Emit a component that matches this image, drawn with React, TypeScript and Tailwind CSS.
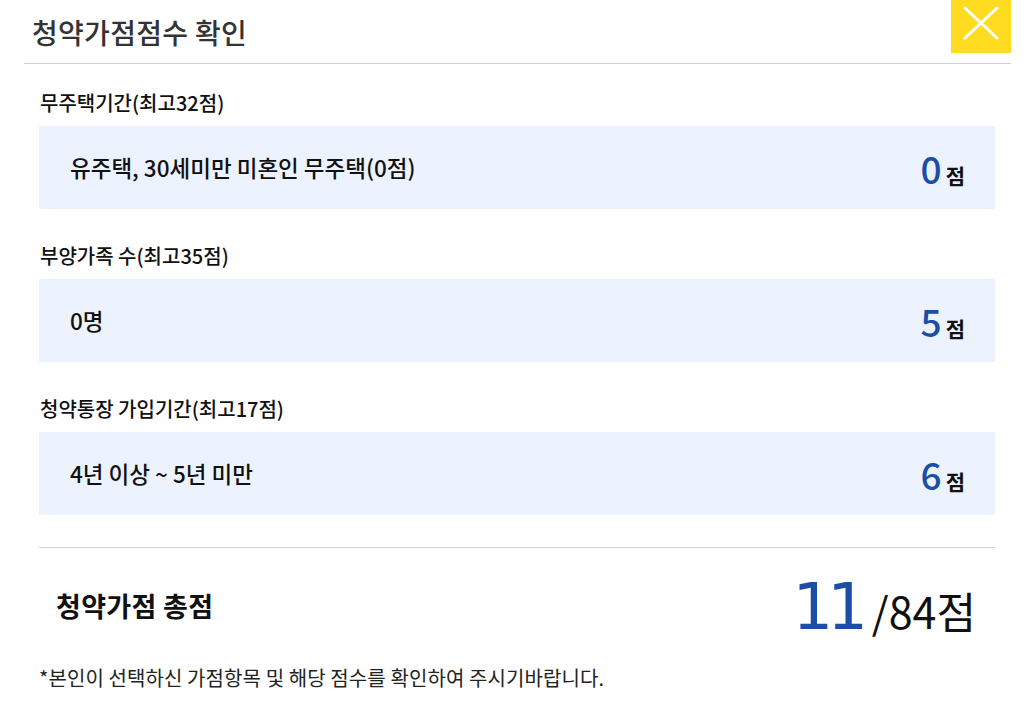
const items = [
  { label: '무주택기간', max: 32, value: '유주택, 30세미만 미혼인 무주택(0점)', score: 0 },
  { label: '부양가족 수', max: 35, value: '0명', score: 5 },
  { label: '청약통장 가입기간', max: 17, value: '4년 이상 ~ 5년 미만', score: 6 },
];

export default function App() {
  const total = items.reduce((sum, item) => sum + item.score, 0);

  return (
    <div
      className="w-[1032px] h-[704px] bg-white text-[#111]"
      style={{ fontFamily: '"Noto Sans CJK KR", "Noto Sans", sans-serif' }}
    >
      {/* Header */}
      <div className="ml-6 mr-[21px] h-16 border-b border-[#cfcfcf] flex items-start justify-between">
        <h1 className="pl-2 pt-[13px] text-[28px] leading-[38px] font-medium text-[#333] tracking-[0.3px]">
          청약가점점수 확인
        </h1>
        <button className="w-[60px] h-[53px] bg-[#ffdc22] flex items-center justify-center">
          <svg width="36" height="34" viewBox="0 0 36 34" className="mb-[7px]">
            <path d="M2 2 L34 32 M34 2 L2 32" stroke="white" strokeWidth="3" strokeLinecap="round" fill="none" />
          </svg>
        </button>
      </div>

      {/* Items */}
      <div className="pl-[39px] pr-[37px]">
        <div className="pt-[26px] flex flex-col gap-[34px]">
          {items.map((item) => (
            <div key={item.label}>
              <p className="pl-[1px] text-[20px] leading-[25px] font-medium mb-[11px]">
                {item.label}(최고{item.max}점)
              </p>
              <div className="h-[83px] bg-[#edf3fe] pl-[31px] pr-[30px] flex items-center justify-between">
                <span className="text-[22.5px] font-medium">{item.value}</span>
                <span className="flex items-baseline gap-[4px] pt-[2px]">
                  <span className="text-[37px] leading-none text-[#1c4ea6] font-medium">{item.score}</span>
                  <span className="text-[21px] leading-none font-bold">점</span>
                </span>
              </div>
            </div>
          ))}
        </div>

        {/* Total */}
        <div className="mt-[32px] border-t border-[#cfcfcf] h-[118px] flex items-center justify-between pl-[17px] pr-[19px]">
          <span className="text-[27px] font-bold tracking-[0.3px]">청약가점 총점</span>
          <span className="flex items-baseline gap-[10px]">
            <span
              className="text-[64px] leading-none text-[#1c4ea6] tracking-[-6px]"
              style={{ fontFamily: '"DejaVu Sans", sans-serif' }}
            >
              {total}
            </span>
            <span className="text-[43px] leading-none">/84점</span>
          </span>
        </div>
      </div>

      <p className="pl-[39px] text-[20px] leading-[26px] text-[#222] tracking-[0.1px]">
        *본인이 선택하신 가점항목 및 해당 점수를 확인하여 주시기바랍니다.
      </p>
    </div>
  );
}
